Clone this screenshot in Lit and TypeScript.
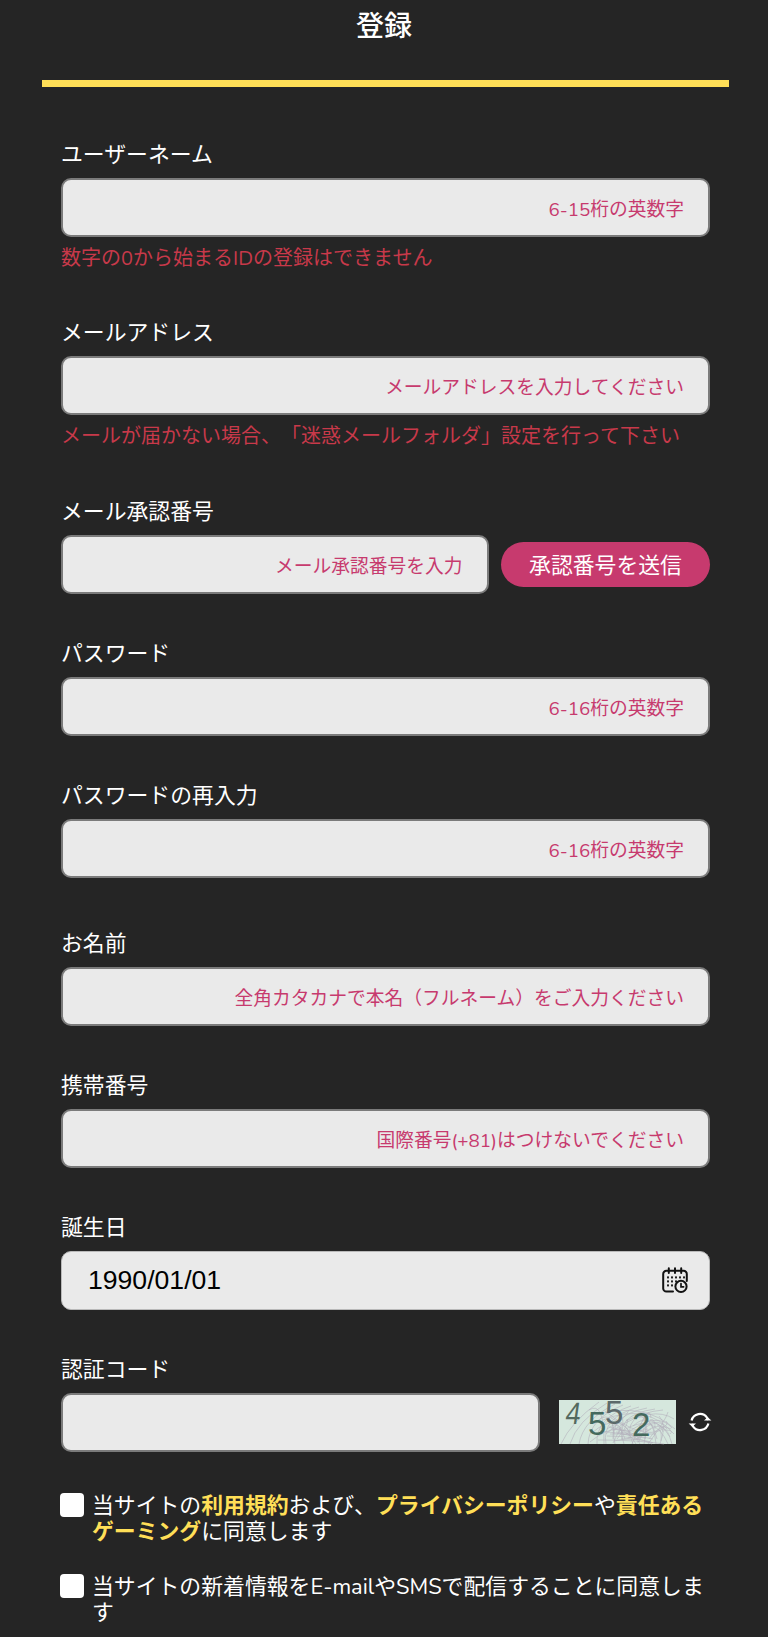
import { LitElement, html, css, svg } from "lit";
import { customElement } from "lit/decorators.js";

const calendar = html`<svg class="cal" viewBox="0 0 26 26" width="26" height="26" fill="none" stroke="#111" stroke-width="2" stroke-linecap="round">
  <path d="M11 24.6H4.4A3.2 3.2 0 0 1 1.2 21.4V7A3.2 3.2 0 0 1 4.4 3.8h17.2A3.2 3.2 0 0 1 24.8 7v7"/>
  <path d="M6.8 1.2v4.8M13 1.2v4.8M19.2 1.2v4.8"/>
  <g stroke="none" fill="#222">
    <rect x="5" y="9.4" width="2" height="2"/><rect x="9" y="9.4" width="2" height="2"/><rect x="13" y="9.4" width="2" height="2"/><rect x="17" y="9.4" width="2" height="2"/><rect x="21" y="9.4" width="2" height="2"/>
    <rect x="5" y="13.4" width="2" height="2"/><rect x="9" y="13.4" width="2" height="2"/><rect x="13" y="13.4" width="2" height="2"/>
    <rect x="5" y="17.4" width="2" height="2"/><rect x="9" y="17.4" width="2" height="2"/>
  </g>
  <circle cx="19" cy="19.4" r="5.6" fill="#eaeaea"/>
  <path d="M19 16.6v3.2h2.6" stroke-width="1.7"/>
</svg>`;

const refresh = html`<svg class="refresh" viewBox="0 0 24 24" width="24" height="24" fill="none" stroke="#fff" stroke-width="2.2">
  <path d="M3.6 10.5A8.6 8.6 0 0 1 19 7.6l1 2.4"/>
  <path d="M20.4 13.5A8.6 8.6 0 0 1 5 16.4l-1-2.4"/>
  <path d="M16 10.6h7.4l-3.7 -3.4z" fill="#fff" stroke="none"/>
  <path d="M8 13.4H0.6l3.7 3.4z" fill="#fff" stroke="none"/>
</svg>`;

const noise: string[] = [];
for (let i = 0; i < 46; i++) {
  const x1 = 30 + (i * 37) % 87;
  const x2 = 45 + (i * 53) % 72;
  const y1 = 10 + (i * 11) % 34;
  noise.push(`M${x1} ${y1}Q${(x1 + x2) / 2 + 8} ${(i * 7) % 44} ${x2} ${44 - (i * 5) % 20}`);
}
for (let i = 0; i < 9; i++) {
  noise.push(`M${2 + i * 9} 44Q${12 + i * 6} ${22 - i} ${40 + i * 8} ${2 + i}`);
}

const captcha = html`<svg class="captcha" viewBox="0 0 117 44" width="117" height="44">
  <rect width="117" height="44" fill="#d5e7dd"/>
  ${noise.map((d) => svg`<path d=${d} fill="none" stroke="#b4b0bc" stroke-width=".8" stroke-opacity=".75"/>`)}
  <g font-family="Liberation Sans, sans-serif" fill="#446a5d">
    <text x="6" y="24" font-size="31" transform="skewX(-8) translate(3 0)" fill="#54695f" textLength="15" lengthAdjust="spacingAndGlyphs">4</text>
    <text x="29" y="35" font-size="33">5</text>
    <text x="46" y="24" font-size="33" fill="#5c6a6a">5</text>
    <text x="73" y="35.5" font-size="33">2</text>
  </g>
</svg>`;

@customElement("app-root")
export class AppRoot extends LitElement {
  static styles = css`
    :host {
      display: block;
      height: 1637px;
      overflow: hidden;
      background: #252525;
      color: #fff;
      font-family: "Nunito", "Noto Sans", "Noto Sans CJK JP", sans-serif;
      text-spacing-trim: space-all;
    }
    .title {
      margin: 0;
      height: 52px;
      line-height: 54px;
      text-align: center;
      font-size: 28px;
      font-weight: 500;
    }
    .rule {
      height: 7px;
      margin: 27.5px 39px 0 42px;
      background: #ffdf57;
    }
    form { padding: 0 58px 0 61px; }
    .field { display: block; }
    .label {
      height: 26px;
      line-height: 26px;
      font-size: 21.85px;
      margin-bottom: 10px;
      font-weight: 400;
    }
    .input {
      box-sizing: border-box;
      height: 58.5px;
      background: #eaeaea;
      border: 2px solid #7b7b7b;
      border-radius: 10px;
      display: flex;
      align-items: center;
      justify-content: flex-end;
      padding: 2px 24px 0;
      font-size: 18.75px;
      color: #c73a6e;
      flex: 1;
      min-width: 0;
    }
    .row { display: flex; align-items: center; }
    .error {
      height: 26px;
      line-height: 26px;
      margin-top: 9px;
      font-size: 20px;
      color: #c8394a;
      white-space: nowrap;
    }
    .send {
      flex: none;
      width: 209px;
      height: 45px;
      margin-left: 12.5px;
      box-sizing: border-box;
      border: 0;
      padding: 0;
      border-radius: 23px;
      background: #c73a6e;
      color: #fff;
      font: inherit;
      font-size: 21.85px;
    }
    .date {
      border: 1px solid #b9b9b9;
      justify-content: space-between;
      padding: 0 21px 0 26px;
      font-family: "Liberation Sans", sans-serif;
      font-size: 26.6px;
      color: #000;
    }
    .cal { display: block; }
    .captcha-row .input { flex: none; width: 479px; }
    .captcha { display: block; margin-left: 19px; flex: none; overflow: visible; }
    .refresh { display: block; margin-left: 11.5px; flex: none; }
    .check {
      display: flex;
      align-items: flex-start;
      font-size: 21.85px;
      line-height: 26px;
    }
    .box {
      flex: none;
      width: 24px;
      height: 24px;
      border-radius: 4px;
      background: #fff;
      margin: 0 8px 0 -1px;
    }
    .check a { color: #ffdf57; text-decoration: none; font-weight: 600; }
    .check p { margin: 0; flex: 1; }
  `;

  private field(label: string, ph: string, err: string, top: number) {
    return html`<div class="field" style="margin-top:${top}px">
      <div class="label">${label}</div>
      <div class="input">${ph}</div>
      ${err ? html`<div class="error">${err}</div>` : ""}
    </div>`;
  }

  render() {
    return html`
      <h1 class="title">登録</h1>
      <div class="rule"></div>
      <form>
        ${this.field("ユーザーネーム", "6-15桁の英数字", "数字の0から始まるIDの登録はできません", 55.5)}
        ${this.field("メールアドレス", "メールアドレスを入力してください", "メールが届かない場合、「迷惑メールフォルダ」設定を行って下さい", 48.5)}
        <div class="field" style="margin-top:49.5px">
          <div class="label">メール承認番号</div>
          <div class="row">
            <div class="input">メール承認番号を入力</div>
            <button type="button" class="send">承認番号を送信</button>
          </div>
        </div>
        ${this.field("パスワード", "6-16桁の英数字", "", 47.5)}
        ${this.field("パスワードの再入力", "6-16桁の英数字", "", 47.5)}
        ${this.field("お名前", "全角カタカナで本名（フルネーム）をご入力ください", "", 53.5)}
        ${this.field("携帯番号", "国際番号(+81)はつけないでください", "", 47.5)}
        <div class="field" style="margin-top:47.5px">
          <div class="label">誕生日</div>
          <div class="input date"><span>1990/01/01</span>${calendar}</div>
        </div>
        <div class="field" style="margin-top:47.5px">
          <div class="label">認証コード</div>
          <div class="row captcha-row">
            <div class="input"></div>
            ${captcha}
            ${refresh}
          </div>
        </div>
        <div class="check" style="margin-top:41px">
          <span class="box"></span>
          <p>当サイトの<a>利用規約</a>および、<a>プライバシーポリシー</a>や<a>責任あるゲーミング</a>に同意します</p>
        </div>
        <div class="check" style="margin-top:29px">
          <span class="box"></span>
          <p>当サイトの新着情報をE-mailやSMSで配信することに同意します</p>
        </div>
      </form>
    `;
  }
}
